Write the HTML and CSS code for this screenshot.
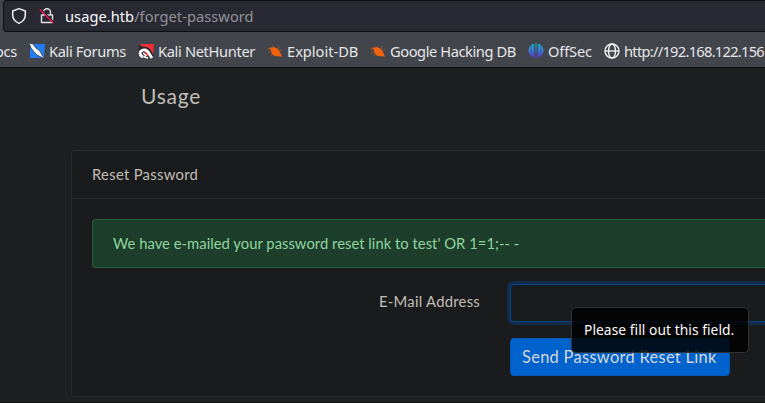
FILE: index.html
```
<!DOCTYPE html>
<html lang="en">
<head>
<meta charset="utf-8">
<title>Usage</title>
<link rel="stylesheet" href="styles.css">
</head>
<body>
<header class="chrome">
  <div class="urlbar">
    <svg class="shield" width="16" height="18" viewBox="0 0 16 18"><path d="M8 1.600 14.300 4v4.300c0 3.500-2.300 6.200-6.300 8.100-4-1.900-6.300-4.600-6.300-8.100V4z" fill="none" stroke="#f0f0f2" stroke-width="1.500" stroke-linejoin="round"/></svg>
    <svg class="lock" width="16" height="18" viewBox="0 0 16 18"><path d="M4.500 8V5.200a3.500 3.500 0 0 1 7 0V8M2.500 8h11v7.500h-11z" fill="none" stroke="#e4e4e7" stroke-width="1.400" stroke-linejoin="round"/><path d="M1.500 1.800 15 15.300" stroke="#292933" stroke-width="1.500"/><path d="M.8 2.500 14.300 16" stroke="#e8114b" stroke-width="1.500"/></svg>
    <span class="url"><b>usage.htb</b>/forget-password</span>
  </div>
  <nav class="bookmarks">
    <a class="docs">ocs</a>
    <a class="bm forums"><svg width="16" height="16" viewBox="0 0 16 16"><path d="M1 1h15l-1 14H1z" fill="#237cf3"/><path d="m0 0 4 1 3 4 4 3 2 4 3 4-4-2-4-2-3-3-3-4z" fill="#f5f5f5" stroke="#202632" stroke-width=".7"/></svg><span>Kali Forums</span></a>
    <a class="bm nethunter"><svg width="16" height="16" viewBox="0 0 16 16"><path d="M2 1h14l-1 12H9z" fill="#ef3038"/><path d="M2 11C0 7 4 5 8 6c3 0 4 4 6 8" fill="none" stroke="#25262a" stroke-width="4"/><path d="m1 2 5 2-4 3z" fill="#25262a"/><path d="M5 14c-4-2-4-6 0-7 5-1 6 4 9 8" fill="none" stroke="#fff" stroke-width="2.800"/><path d="m5 10 3 2-2 2 4 1" fill="none" stroke="#fff" stroke-width="1.300"/></svg><span>Kali NetHunter</span></a>
    <a class="bm exploit"><svg width="16" height="16" viewBox="0 0 16 16"><g fill="#f0620d" stroke="#f0620d"><path d="M2 5c3-1 6-1 9 1l3 5 1 3-3-1c-5 1-8-2-8-6z" stroke="none"/><path d="M3 5 0 6.500m4 2-3 1.500m5 0-2 3m4-8L5 2.500m6 3.500 1-3m0 5 3-1m-4 5 1 2" fill="none" stroke-width=".6" stroke-opacity=".8"/></g></svg><span>Exploit-DB</span></a>
    <a class="bm google"><svg width="16" height="16" viewBox="0 0 16 16"><g fill="#f0620d" stroke="#f0620d"><path d="M2 5c3-1 6-1 9 1l3 5 1 3-3-1c-5 1-8-2-8-6z" stroke="none"/><path d="M3 5 0 6.500m4 2-3 1.500m5 0-2 3m4-8L5 2.500m6 3.500 1-3m0 5 3-1m-4 5 1 2" fill="none" stroke-width=".6" stroke-opacity=".8"/></g></svg><span>Google Hacking DB</span></a>
    <a class="bm offsec"><svg width="16" height="16" viewBox="0 0 16 16"><defs><linearGradient id="os" gradientUnits="userSpaceOnUse" x1="0" y1="0" x2="0" y2="16"><stop offset="0" stop-color="#10b4c8"/><stop offset=".5" stop-color="#3975d8"/><stop offset="1" stop-color="#6524d0"/></linearGradient></defs><path d="M2.800 2.500v10C-.5 10 0 5 2.800 2.500zM3.200 2 6.200.5v14L3.200 13zM7.500 0h1v16h-1zM9.800.5 12.800 2v11l-3 1.500zM13.200 2.500c3 2.500 3.300 7.500 0 10z" fill="url(#os)"/></svg><span>OffSec</span></a>
    <a class="bm host"><svg width="16" height="16" viewBox="0 0 16 16"><g fill="none" stroke="#f1f1f2" stroke-width="1.400"><circle cx="8" cy="8" r="7"/><ellipse cx="8" cy="8" rx="3.500" ry="7"/><path d="M1 8h14"/></g></svg><span>http://192.168.122.156</span></a>
  </nav>
</header>
<main class="page">
  <div class="brand"><span>Usage</span></div>
  <section class="card">
    <h1 class="card-header"><span>Reset Password</span></h1>
    <div class="card-body">
      <div class="alert"><span>We have e-mailed your password reset link to test' OR 1=1;-- -</span></div>
      <form class="form">
        <label for="email"><span>E-Mail Address</span></label>
        <div class="field">
          <input id="email" type="email">
          <div class="tooltip"><span>Please fill out this field.</span></div>
        </div>
        <button type="button"><span>Send Password Reset Link</span></button>
      </form>
    </div>
  </section>
</main>
</body>
</html>
```
FILE: styles.css
```
* { box-sizing: border-box; }
body {
  margin: 0;
  width: 765px;
  height: 403px;
  overflow: hidden;
  background: #1c2021;
  color: #c2beb7;
  font-family: Lato, sans-serif;
}
.chrome {
  height: 68px;
  background: #42454c;
  border-bottom: 1px solid #0e0f11;
  font: 14.67px/20px "Noto Sans", sans-serif;
}
.urlbar {
  height: 32px;
  margin-left: 3px;
  padding-left: 7px;
  display: flex;
  align-items: center;
  background: #292933;
  border: 1px solid #0d0e13;
  border-right: 0;
  border-radius: 4px 0 0 4px;
}
.shield { margin-right: 12px; }
.lock { margin-right: 10px; }
.url { color: #929298; white-space: nowrap; letter-spacing: .03px; }
.url b { font-weight: 400; color: #fbfbfe; }
.bookmarks {
  height: 35px;
  padding-top: 3px;
  display: flex;
  align-items: center;
  color: #e6e6e8;
}
.docs { width: 29px; padding-right: 12px; display: flex; justify-content: flex-end; flex: none; letter-spacing: -.3px; }
.bm { display: flex; align-items: center; gap: 4px; flex: none; white-space: nowrap; }
.bm svg { flex: none; }
.forums { width: 109px; letter-spacing: -.37px; }
.nethunter { width: 129px; letter-spacing: -.35px; }
.exploit { width: 103px; letter-spacing: -.02px; }
.google { width: 158px; letter-spacing: -.43px; }
.offsec { width: 76px; letter-spacing: -.15px; }
.host { letter-spacing: -.72px; }
.page { height: 335px; padding-left: 71px; border-bottom: 1px solid #0f1111; }
.brand { height: 82px; padding: 14px 0 0 70px; font-size: 21px; line-height: 28px; letter-spacing: .75px; }
.card {
  width: 694px;
  height: 247px;
  background: #1a1b1d;
  border: 1px solid #292b2d;
  border-right: 0;
  border-radius: 4px 0 0 4px;
}
.card-header {
  height: 48px;
  margin: 0;
  padding-left: 20px;
  font-size: 14.8px;
  font-weight: 400;
  line-height: 47px;
  letter-spacing: .3px;
  border-bottom: 1px solid #292b2d;
}
.card-body { padding: 20px 0 20px 20px; }
.alert {
  height: 49px;
  padding-left: 20px;
  margin-bottom: 16px;
  font-size: 14.8px;
  line-height: 47px;
  letter-spacing: .02px;
  white-space: nowrap;
  color: #8fd5a0;
  background: #1d3e2a;
  border: 1px solid #245d34;
  border-right: 0;
  border-radius: 4px 0 0 4px;
}
.form { display: grid; grid-template-columns: 388px 255px; column-gap: 30px; row-gap: 16px; }
.form label { font-size: 14.8px; line-height: 35px; text-align: right; letter-spacing: .26px; }
.field { position: relative; height: 38px; }
input {
  display: block;
  width: 255px;
  height: 38px;
  background: #1a1b1d;
  border: 1px solid #02468e;
  border-right: 0;
  border-radius: 4px 0 0 4px;
  box-shadow: 0 0 0 3px #132c4a;
  outline: none;
}
.tooltip {
  position: absolute;
  left: 61px;
  top: 23px;
  z-index: 1;
  width: 178px;
  height: 46px;
  padding-left: 12px;
  font: 13.8px/43px "Noto Sans", sans-serif;
  letter-spacing: .05px;
  white-space: nowrap;
  color: #fbfbfe;
  background: rgba(0, 0, 0, .84);
  border: 1px solid #313236;
  border-radius: 5px;
}
button {
  grid-column: 2;
  width: 220px;
  height: 38px;
  padding: 0 0 0 11px;
  font: 16.4px/36px Lato, sans-serif;
  letter-spacing: .32px;
  text-align: left;
  white-space: nowrap;
  color: #d5d8da;
  background: #0062cc;
  border: 1px solid #0059b8;
  border-radius: 4px;
}
```
